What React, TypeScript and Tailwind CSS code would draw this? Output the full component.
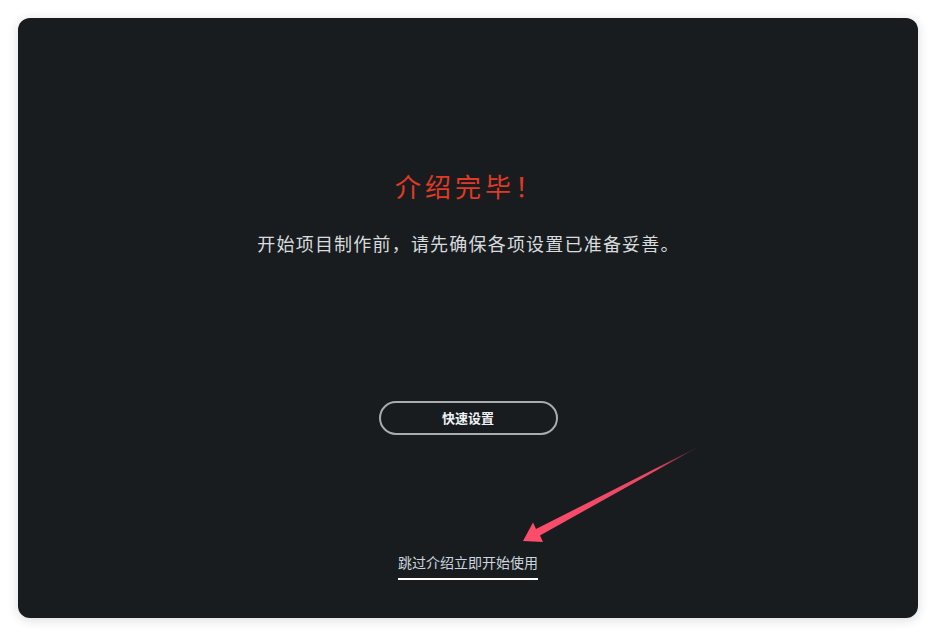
import React from "react";

const cjk = "font-['Noto_Sans_CJK_SC','Noto_Sans',sans-serif]";

// 指向"跳过介绍"链接的提示箭头，尾部渐隐
function HintArrow() {
  return (
    <svg
      className="pointer-events-none absolute left-0 top-0"
      width="900"
      height="600"
      viewBox="18 18 900 600"
    >
      <defs>
        <linearGradient id="arrowFade" x1="700" y1="446" x2="523" y2="541" gradientUnits="userSpaceOnUse">
          <stop offset="0" stopColor="#ff4d6a" stopOpacity="0.1" />
          <stop offset="0.25" stopColor="#ff4d6a" stopOpacity="0.9" />
          <stop offset="1" stopColor="#ff4d6a" />
        </linearGradient>
      </defs>
      <polygon
        points="701,445.5 536,529 533,522.5 523,541 543,542 540,535.5"
        fill="url(#arrowFade)"
      />
    </svg>
  );
}

export default function App() {
  return (
    <div className="min-h-[636px] w-[936px] bg-white p-[18px]">
      <div
        className={`relative flex h-[600px] w-[900px] flex-col items-center rounded-xl bg-[#181c1f] shadow-[0_2px_12px_rgba(0,0,0,0.14)] ${cjk}`}
      >
        <h1 className="mt-[151px] pl-[4px] text-[26px] leading-[34px] tracking-[4px] text-[#e03a26]">
          介绍完毕！
        </h1>
        <p className="mt-[26px] pl-[1px] text-[18px] leading-[28px] tracking-[1.2px] text-[#d9dcde]">
          开始项目制作前，请先确保各项设置已准备妥善。
        </p>

        <button className="mt-[144px] flex h-[34px] w-[179px] items-center justify-center rounded-full border-2 border-[#a9acae] text-[13px] font-bold text-[#eef2f5]">
          快速设置
        </button>

        <a className="mt-[117px] border-b-2 border-white pb-[6px] text-[14px] leading-[20px] text-[#cbd6de]">
          跳过介绍立即开始使用
        </a>

        <HintArrow />
      </div>
    </div>
  );
}
